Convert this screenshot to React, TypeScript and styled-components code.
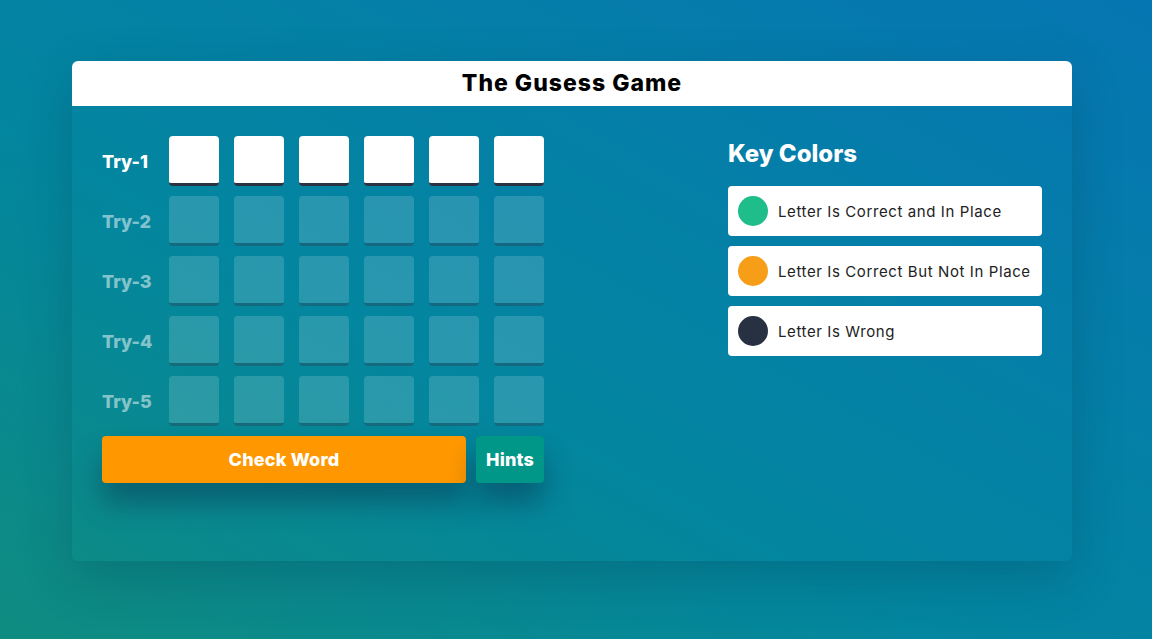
import React from 'react';
import styled, { createGlobalStyle } from 'styled-components';

const GlobalStyle = createGlobalStyle`
  * {
    box-sizing: border-box;
  }
  body {
    margin: 0;
    min-height: 100vh;
    font-family: Inter, 'Open Sans', 'Liberation Sans', sans-serif;
    background: linear-gradient(to right top, #0f8c80 0%, #03869f 40%, #0676b2 100%);
    background-attachment: fixed;
  }
`;

const Page = styled.div`
  padding: 61px 72px 78px;
`;

const Board = styled.main`
  width: 1000px;
  height: 500px;
  border-radius: 6px;
  box-shadow: 0 18px 50px rgba(0, 40, 60, 0.22);
  display: flex;
  flex-direction: column;
`;

const Header = styled.h1`
  margin: 0;
  height: 45px;
  background: #fff;
  border-radius: 6px 6px 0 0;
  color: #000;
  font-size: 23px;
  font-weight: 800;
  text-align: center;
  line-height: 45px;
  letter-spacing: 1px;
`;

const Body = styled.div`
  flex: 1;
  display: flex;
  justify-content: space-between;
  padding: 30px;
`;

const GameArea = styled.section`
  display: flex;
  flex-direction: column;
  gap: 10px;
  width: 442px;
`;

const Row = styled.div<{ $active: boolean }>`
  display: flex;
  align-items: center;
  height: 50px;
  opacity: ${(p) => (p.$active ? 1 : 0.5)};
`;

const RowLabel = styled.span`
  width: 67px;
  color: #fff;
  font-size: 18px;
  font-weight: 800;
`;

const Tiles = styled.div`
  display: flex;
  gap: 15px;
`;

const Tile = styled.div<{ $active: boolean }>`
  width: 50px;
  height: 50px;
  border-radius: 4px;
  background: ${(p) => (p.$active ? '#fff' : 'rgba(255, 255, 255, 0.3)')};
  border-bottom: 3px solid ${(p) => (p.$active ? '#2b3343' : 'rgba(20, 40, 60, 0.7)')};
`;

const Controls = styled.div`
  display: flex;
  gap: 10px;
`;

const Button = styled.button<{ $color: string; $grow?: boolean }>`
  flex: ${(p) => (p.$grow ? 1 : '0 0 68px')};
  height: 47px;
  border: none;
  border-radius: 4px;
  background: ${(p) => p.$color};
  color: #fff;
  font-family: inherit;
  font-size: 18px;
  font-weight: 800;
  letter-spacing: 0.2px;
  padding: 0;
  box-shadow: 0 20px 28px rgba(10, 40, 70, 0.42);
  cursor: pointer;
`;

const KeyPanel = styled.aside`
  width: 314px;
`;

const KeyTitle = styled.h2`
  margin: 0 0 14px;
  color: #fff;
  font-size: 24px;
  font-weight: 800;
  line-height: 36px;
`;

const KeyList = styled.div`
  display: flex;
  flex-direction: column;
  gap: 10px;
`;

const KeyItem = styled.div`
  display: flex;
  align-items: center;
  gap: 10px;
  height: 50px;
  padding: 0 10px;
  background: #fff;
  border-radius: 4px;
  color: #222;
  font-size: 15px;
  letter-spacing: 0.6px;
`;

const Dot = styled.span<{ $color: string }>`
  width: 30px;
  height: 30px;
  border-radius: 50%;
  background: ${(p) => p.$color};
  flex-shrink: 0;
`;

const keys = [
  { color: '#1ebd8a', text: 'Letter Is Correct and In Place' },
  { color: '#f69e18', text: 'Letter Is Correct But Not In Place' },
  { color: '#283141', text: 'Letter Is Wrong' },
];

export default function App() {
  const tries = [1, 2, 3, 4, 5];
  const letters = [0, 1, 2, 3, 4, 5];

  return (
    <>
      <GlobalStyle />
      <Page>
        <Board>
          <Header>The Gusess Game</Header>
          <Body>
            <GameArea>
              {tries.map((t) => (
                <Row key={t} $active={t === 1}>
                  <RowLabel>Try-{t}</RowLabel>
                  <Tiles>
                    {letters.map((l) => (
                      <Tile key={l} $active={t === 1} />
                    ))}
                  </Tiles>
                </Row>
              ))}
              <Controls>
                <Button $color="#ff9800" $grow>
                  Check Word
                </Button>
                <Button $color="#009688">Hints</Button>
              </Controls>
            </GameArea>
            <KeyPanel>
              <KeyTitle>Key Colors</KeyTitle>
              <KeyList>
                {keys.map((k) => (
                  <KeyItem key={k.text}>
                    <Dot $color={k.color} />
                    {k.text}
                  </KeyItem>
                ))}
              </KeyList>
            </KeyPanel>
          </Body>
        </Board>
      </Page>
    </>
  );
}
